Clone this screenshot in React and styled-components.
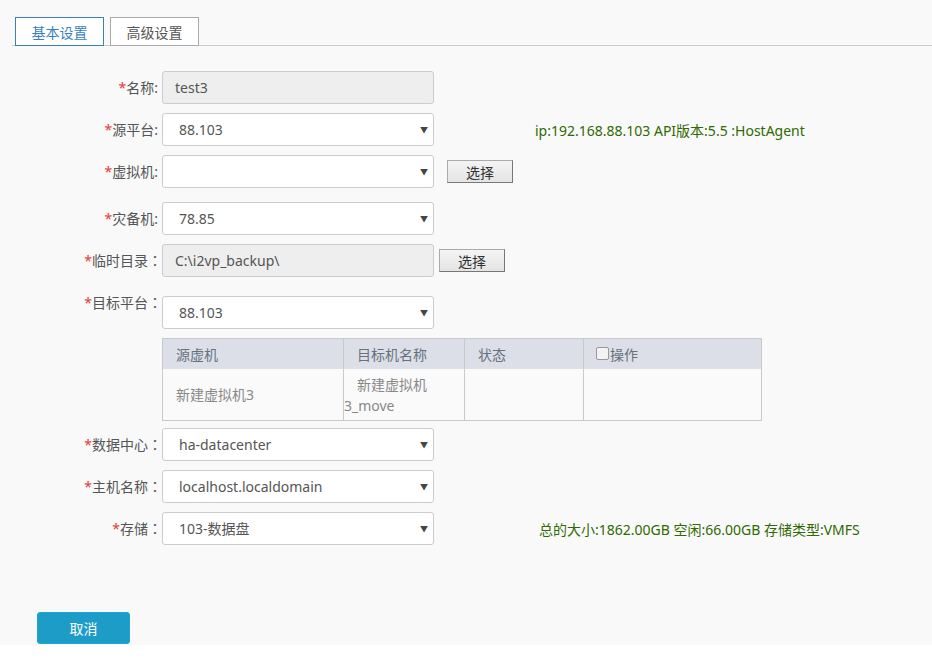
import React from 'react'
import styled, { createGlobalStyle } from 'styled-components'

const GlobalStyle = createGlobalStyle`
  body {
    margin: 0;
    background: #fff;
    font-family: "Noto Sans", "Noto Sans CJK SC", sans-serif;
    font-size: 14px;
    color: #555;
  }
`

const Page = styled.div`
  background: #f9f9f9;
  min-height: 645px;
  padding-top: 17px;
  box-sizing: border-box;
`

const TabBar = styled.div`
  display: flex;
  gap: 6px;
  margin-left: 12px;
  padding-left: 3px;
  border-bottom: 1px solid #ccc;
`

const Tab = styled.div`
  width: 89px;
  height: 29px;
  box-sizing: border-box;
  margin-bottom: -1px;
  display: flex;
  align-items: center;
  justify-content: center;
  background: #fff;
  border: 1px solid ${({ $active }) => ($active ? '#3b7fc1' : '#aaa')};
  color: ${({ $active }) => ($active ? '#3b7fc1' : '#555')};
  font-size: 14px;
`

const Form = styled.div`
  margin-top: 25px;
  display: flex;
  flex-direction: column;
`

const Row = styled.div`
  display: flex;
  align-items: ${({ $top }) => ($top ? 'flex-start' : 'center')};
  margin-bottom: ${({ $gap }) => $gap || 9}px;
`

const Label = styled.div`
  width: 162px;
  box-sizing: border-box;
  padding-right: ${({ $wide }) => ($wide ? 0 : 4)}px;
  text-align: right;
  line-height: 20px;
  color: #555;
  white-space: nowrap;
  margin-top: ${({ $top }) => ($top ? '-4px' : '0')};
`

const Star = styled.span`
  color: #e4393c;
`

const Colon = styled.span`
  font-family: "Noto Sans CJK TC", sans-serif;
`

const Field = styled.div`
  width: 272px;
  height: 33px;
  box-sizing: border-box;
  border: 1px solid #ccc;
  border-radius: 3px;
  background: ${({ $disabled }) => ($disabled ? '#eee' : '#fff')};
  display: flex;
  align-items: center;
  justify-content: space-between;
  padding: 0 5px 0 ${({ $disabled }) => ($disabled ? 12 : 16)}px;
  color: #555;
  font-size: 14px;
  line-height: 20px;
`

const Arrow = styled.span`
  font-size: 8px;
  color: #444;
`

const PickButton = styled.button`
  margin-left: ${({ $offset }) => $offset}px;
  width: 66px;
  height: 23px;
  padding: 0;
  font-family: inherit;
  font-size: 14px;
  color: #333;
  background: linear-gradient(#f4f4f4, #e4e4e4);
  border: 1px solid #aaa;
  border-right-color: #777;
  border-bottom-color: #777;
  border-radius: 0;
`

const Info = styled.div`
  margin-left: ${({ $offset }) => $offset}px;
  color: #2f6a00;
  font-size: 14px;
  white-space: nowrap;
`

const Table = styled.div`
  margin-left: 162px;
  width: 600px;
  box-sizing: border-box;
  border: 1px solid #c9c9c9;
  display: grid;
  grid-template-columns: 180px 121px 119px 1fr;
  margin-bottom: 7px;
`

const HeadCell = styled.div`
  height: 29px;
  background: #dcdfe8;
  color: #66717e;
  display: flex;
  align-items: center;
  padding-left: 13px;
  border-left: ${({ $first }) => ($first ? 'none' : '1px solid #c9c9c9')};
  border-bottom: 1px solid #dcdfe8;
`

const Cell = styled.div`
  height: 51px;
  box-sizing: border-box;
  background: #fafafa;
  color: #888;
  text-indent: 13px;
  line-height: 21px;
  display: flex;
  align-items: center;
  border-left: ${({ $first }) => ($first ? 'none' : '1px solid #c9c9c9')};
  padding-right: 4px;
`

const Check = styled.span`
  display: inline-block;
  width: 11px;
  height: 11px;
  border: 1px solid #999;
  border-radius: 2px;
  background: #f3f3f3;
  margin-right: 1px;
  margin-left: -1px;
`

const Footer = styled.div`
  margin-top: 58px;
  padding-left: 37px;
`

const CancelButton = styled.button`
  width: 93px;
  height: 32px;
  background: #1e9cc8;
  border: 1px solid #18aad4;
  border-radius: 3px;
  color: #fff;
  font-family: inherit;
  font-size: 14px;
`

function Select({ value }) {
  return (
    <Field>
      <span>{value}</span>
      <Arrow>▼</Arrow>
    </Field>
  )
}

// labels ending with a full-width colon use a centred glyph, like the original font
function FormLabel({ text, wide, top }) {
  return (
    <Label $top={top} $wide={wide}>
      <Star>*</Star>
      {text}
      {wide ? <Colon>：</Colon> : ':'}
    </Label>
  )
}

export default function App() {
  return (
    <Page>
      <GlobalStyle />
      <TabBar>
        <Tab $active>基本设置</Tab>
        <Tab>高级设置</Tab>
      </TabBar>
      <Form>
        <Row>
          <FormLabel text="名称" />
          <Field $disabled>test3</Field>
        </Row>
        <Row>
          <FormLabel text="源平台" />
          <Select value="88.103" />
          <Info $offset={101}>ip:192.168.88.103 API版本:5.5 :HostAgent</Info>
        </Row>
        <Row $gap={14}>
          <FormLabel text="虚拟机" />
          <Select value="" />
          <PickButton $offset={13}>选择</PickButton>
        </Row>
        <Row>
          <FormLabel text="灾备机" />
          <Select value="78.85" />
        </Row>
        <Row $gap={19}>
          <FormLabel text="临时目录" wide />
          <Field $disabled>C:\i2vp_backup\</Field>
          <PickButton $offset={5}>选择</PickButton>
        </Row>
        <Row $top>
          <FormLabel text="目标平台" wide top />
          <Select value="88.103" />
        </Row>
        <Table>
          <HeadCell $first>源虚机</HeadCell>
          <HeadCell>目标机名称</HeadCell>
          <HeadCell>状态</HeadCell>
          <HeadCell>
            <Check />操作
          </HeadCell>
          <Cell $first>新建虚拟机3</Cell>
          <Cell>新建虚拟机3_move</Cell>
          <Cell />
          <Cell />
        </Table>
        <Row>
          <FormLabel text="数据中心" wide />
          <Select value="ha-datacenter" />
        </Row>
        <Row>
          <FormLabel text="主机名称" wide />
          <Select value="localhost.localdomain" />
        </Row>
        <Row>
          <FormLabel text="存储" wide />
          <Select value="103-数据盘" />
          <Info $offset={105}>总的大小:1862.00GB 空闲:66.00GB 存储类型:VMFS</Info>
        </Row>
      </Form>
      <Footer>
        <CancelButton>取消</CancelButton>
      </Footer>
    </Page>
  )
}
